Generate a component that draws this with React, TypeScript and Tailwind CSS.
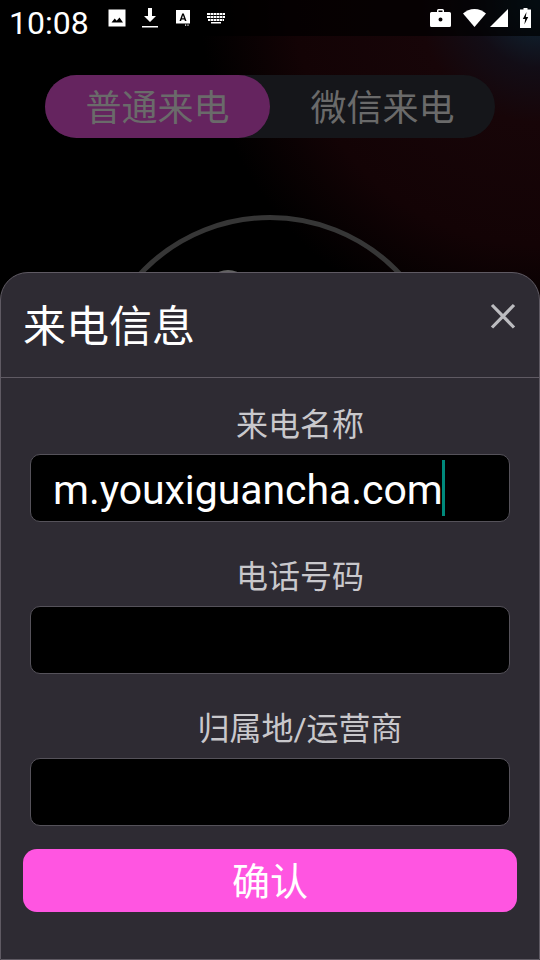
const cjk = "font-['Roboto','Noto_Sans_CJK_SC',sans-serif]";

function StatusIcons() {
  return (
    <>
      <svg width="18" height="18" viewBox="0 0 18 18" className="ml-[19px]" fill="#fff">
        <path fillRule="evenodd" d="M0.500 0.500h17v17h-17z M3.500 13.500h11.500l-3.500-5-2.800 3.300-2-2.300z" />
      </svg>
      <svg width="18" height="22" viewBox="0 0 18 22" className="ml-[15px]" fill="#fff">
        <path d="M7 1h4v8h4l-6 6-6-6h4z" />
        <path d="M1 19h16v1.500H1z" />
      </svg>
      <svg width="16" height="18" viewBox="0 0 16 18" className="ml-[16px]">
        <path fill="#fff" d="M1 1h14v13.500h-14z" />
        <path fill="#000" d="M4.500 12 7.200 4.500h1.600L11.500 12h-1.600l-.5-1.600H6.600L6.100 12zM7 9.200h2L8 6.200z" />
        <path fill="#fff" d="M10 15.500h1.200v1.200H10zm2.400 0h1.200v1.200h-1.200z" />
      </svg>
      <svg width="20" height="12" viewBox="0 0 20 12" className="ml-[15px]" fill="#fff">
        <path d="M1 1h18v2H1zM1 4h18v2H1zM2 7h16v2H2zM5 10h10v1.500H5z" />
        <path fill="#222" d="M4 1h.6v8H4zm3 0h.6v8H7zm3 0h.6v8H10zm3 0h.6v8H13zm3 0h.6v8H16z" />
      </svg>
    </>
  );
}

function RightIcons() {
  return (
    <div className="flex items-center">
      <svg width="21" height="20" viewBox="0 0 21 20" fill="#fff">
        <path fillRule="evenodd" d="M7 4V2.500A1.500 1.500 0 0 1 8.500 1h4A1.500 1.500 0 0 1 14 2.500V4h5.500A1.500 1.500 0 0 1 21 5.500v12a1.500 1.500 0 0 1-1.500 1.500h-18A1.500 1.500 0 0 1 0 17.500v-12A1.500 1.500 0 0 1 1.500 4zm1.500 0h4V2.500h-4zM10.500 9.500a2 2 0 1 0 0 4 2 2 0 0 0 0-4z" />
      </svg>
      <svg width="23" height="18" viewBox="0 0 23 18" className="ml-[12px]" fill="#fff">
        <path d="M0 4.500C3 2 7 0 11.500 0S20 2 23 4.500L11.500 18z" />
      </svg>
      <svg width="18" height="18" viewBox="0 0 18 18" className="ml-[4px]" fill="#fff">
        <path d="M18 0v18H0z" />
      </svg>
      <svg width="11" height="20" viewBox="0 0 11 20" className="ml-[12px]">
        <path fill="#fff" d="M3.500 0h4v1.500H11V20H0V1.500h3.500z" />
        <path fill="#000" d="M6.500 4 2.800 11h2.400l-.8 5.500L8.200 9H5.800z" />
      </svg>
    </div>
  );
}

function Field({ label, value }: { label: string; value?: string }) {
  return (
    <div className="flex flex-col">
      <div className="h-[44px] pb-[2px] pl-[60px] text-center text-[32px] leading-[42px] text-[#c9c8cc]">{label}</div>
      <div className="mx-[29px] mt-[6px] flex h-[68px] items-center rounded-[10px] border border-[#55525a] bg-black pl-[22px]">
        {value && <span className="pt-[4px] text-[41px] leading-[64px] tracking-[-0.06px] text-white">{value}</span>}
        {value && <span className="ml-[-1px] h-[56px] w-[3px] bg-[#00897b]" />}
      </div>
    </div>
  );
}

export default function App() {
  return (
    <div className={`relative h-[960px] w-[540px] overflow-hidden bg-[radial-gradient(circle_340px_at_100%_0%,#0e2c3c_0%,#120d16_20%,#170508_36%,#130305_72%,#000_100%)] ${cjk}`}>
      <div className="flex h-[36px] items-center justify-between bg-black/70 pl-[9px] pr-[9px]">
        <div className="flex items-center">
          <span className="pt-[10px] text-[32px] leading-[36px] text-white">10:08</span>
          <StatusIcons />
        </div>
        <RightIcons />
      </div>

      <div className="mx-[45px] mt-[39px] flex h-[63px] rounded-full bg-[#15161a] text-[36px] text-[#6a6a6a]">
        <div className="flex w-[225px] items-center justify-center rounded-full bg-[#65245f] pt-[5px]">普通来电</div>
        <div className="flex w-[225px] items-center justify-center pt-[5px]">微信来电</div>
      </div>

      {/* dial behind the sheet */}
      <div className="absolute left-[90px] top-[215px] h-[360px] w-[360px] rounded-full border-[5px] border-[#363636]" />
      <div className="absolute left-[205px] top-[270px] h-[46px] w-[46px] rounded-full bg-[#636363]" />

      <div className="absolute inset-x-0 bottom-0 top-[272px] rounded-t-[28px] border border-[#5f5a63] bg-[#2e2b33]">
        <div className="flex h-[105px] items-start justify-between border-b border-[#5f5a63] px-[23px]">
          <h1 className="ml-[-1px] mt-[25px] text-[43px] font-normal leading-[58px] text-white">来电信息</h1>
          <svg width="26" height="26" viewBox="0 0 26 26" className="mt-[30px]" stroke="#bcbcc0" strokeWidth="3.200" fill="none">
            <path d="M2 2l22 22.500M24 2L2 24.500" />
          </svg>
        </div>
        <div className="mt-[26px] flex flex-col gap-[34px]">
          <Field label="来电名称" value="m.youxiguancha.com" />
          <Field label="电话号码" />
          <Field label="归属地/运营商" />
        </div>
        <button className="mx-[22px] mt-[23px] flex h-[63px] w-[494px] items-center justify-center rounded-[14px] bg-[#ff55e1] pt-[3px] text-[38px] text-white">
          确认
        </button>
      </div>
    </div>
  );
}
